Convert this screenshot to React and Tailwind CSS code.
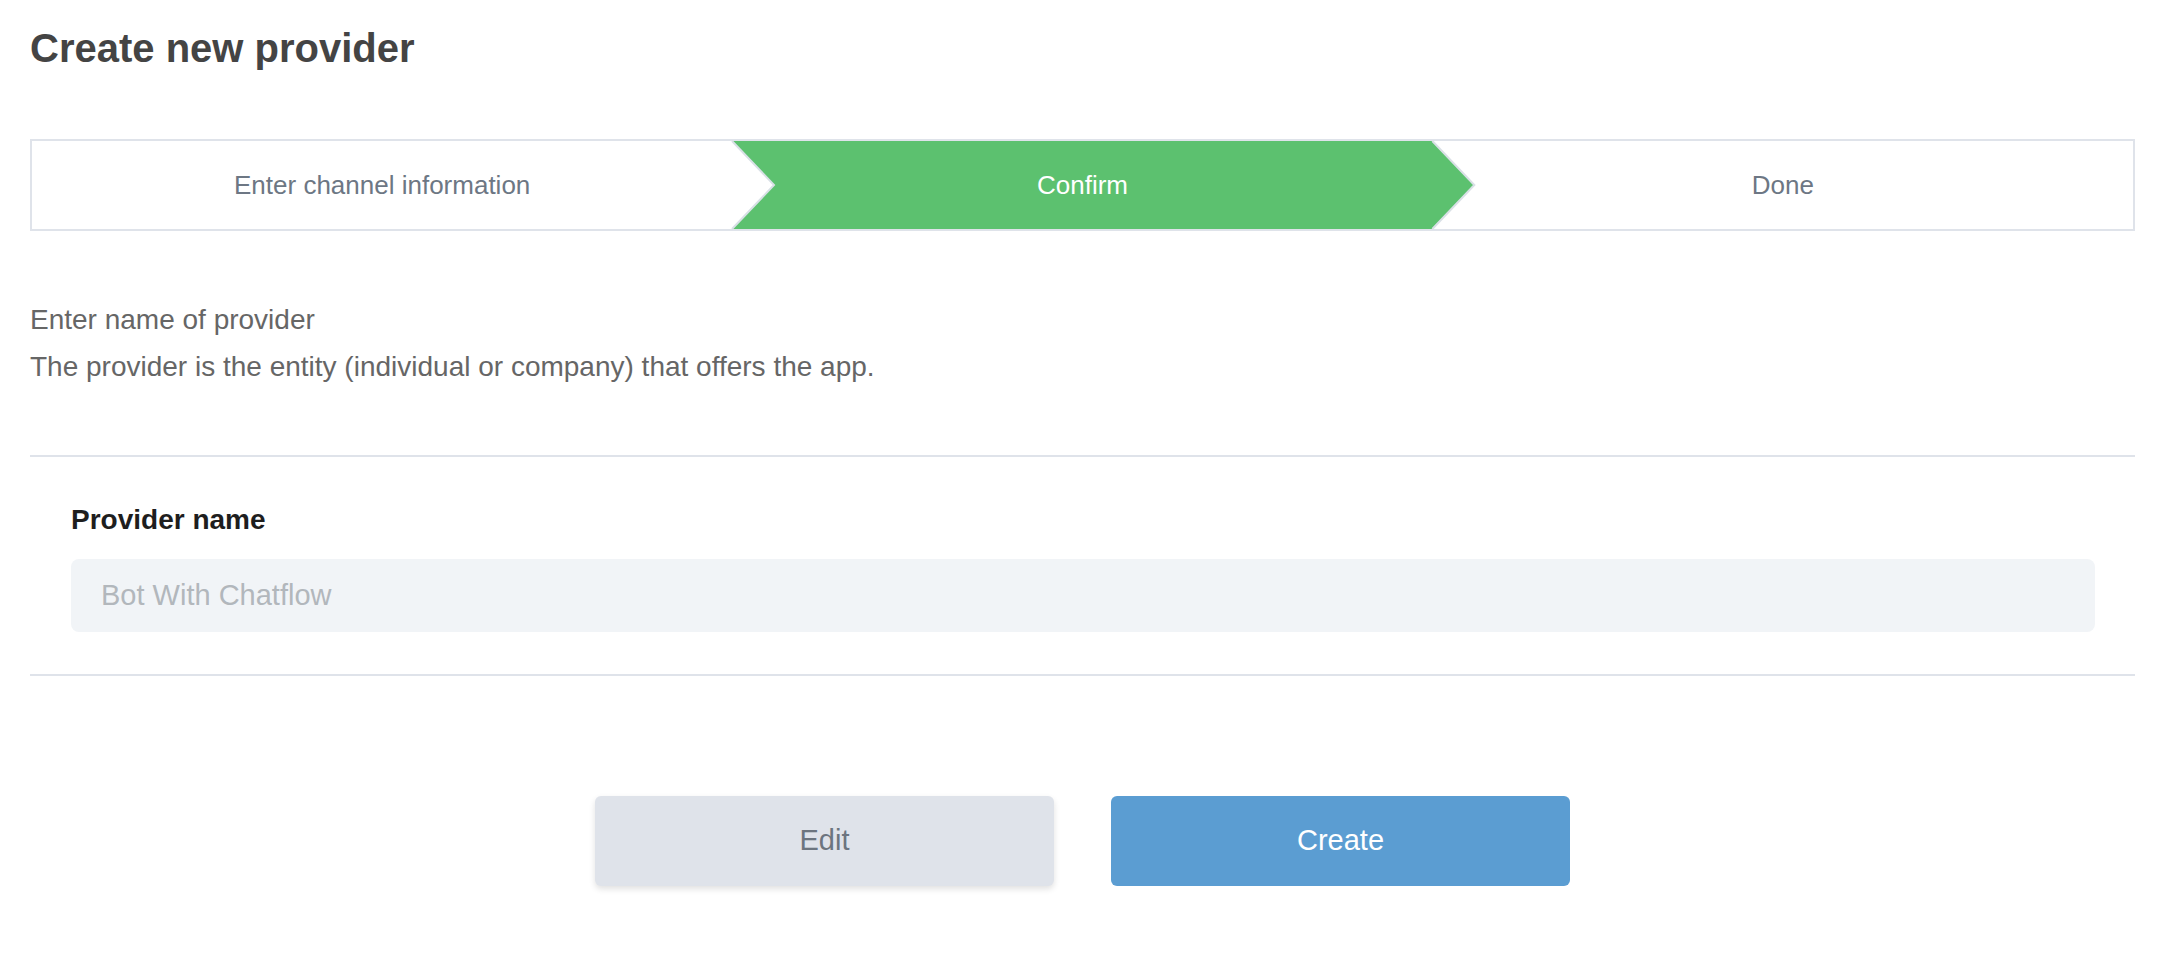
import React from "react";

const steps = ["Enter channel information", "Confirm", "Done"];

function Stepper({ current }) {
  return (
    <div className="mt-[67px] flex h-[92px] border-2 border-[#dfe3ea]">
      {steps.map((label, i) => {
        const active = i === current;
        return (
          <div
            key={label}
            className="relative flex flex-1 items-center justify-center"
          >
            {active && (
              // green chevron drawn behind the label, poking 42px into the next cell
              <svg
                className="absolute left-0 top-0 h-full w-[calc(100%+42px)] overflow-visible"
                viewBox="0 0 742 88"
                preserveAspectRatio="none"
              >
                <polygon
                  points="0,0 700,0 742,44 700,88 0,88 42,44"
                  fill="#5cc16f"
                />
                <polyline
                  points="0,0 42,44 0,88"
                  fill="none"
                  stroke="#d9e0e6"
                  strokeWidth="2"
                  vectorEffect="non-scaling-stroke"
                />
                <polyline
                  points="700,0 742,44 700,88"
                  fill="none"
                  stroke="#d9e0e6"
                  strokeWidth="2"
                  vectorEffect="non-scaling-stroke"
                />
              </svg>
            )}
            <span
              className={
                "relative text-[26px] " +
                (active ? "text-white" : "text-[#6d7784]")
              }
            >
              {label}
            </span>
          </div>
        );
      })}
    </div>
  );
}

export default function App() {
  return (
    <div
      className="min-h-screen bg-white pl-[30px] pr-[39px] pt-[24px] pb-[74px]"
      style={{ fontFamily: '"Liberation Sans", Arial, sans-serif' }}
    >
      <h1 className="text-[40px] font-bold leading-[48px] text-[#444444]">
        Create new provider
      </h1>

      <Stepper current={1} />

      {/* description */}
      <div className="mt-[65px] text-[28px] leading-[47px] text-[#666666]">
        <p>Enter name of provider</p>
        <p>The provider is the entity (individual or company) that offers the app.</p>
      </div>

      {/* form */}
      <div className="mt-[65px] border-y-2 border-[#dfe3ea] pl-[41px] pr-[40px] pt-[45px] pb-[42px]">
        <label className="block text-[28px] font-bold leading-[36px] text-[#1e1e1e]">
          Provider name
        </label>
        <input
          readOnly
          placeholder="Bot With Chatflow"
          className="mt-[21px] block h-[73px] w-full rounded-lg bg-[#f1f4f7] pl-[30px] text-[29px] text-[#333] outline-none placeholder:text-[#b2b7bc]"
        />
      </div>

      {/* actions */}
      <div className="mt-[120px] flex justify-center gap-[57px]">
        <button className="h-[90px] w-[459px] rounded-md bg-[#dfe3ea] text-[29px] text-[#6c757f] shadow-[0_3px_6px_rgba(0,0,0,0.12)]">
          Edit
        </button>
        <button className="h-[90px] w-[459px] rounded-md bg-[#5b9dd2] text-[29px] text-white">
          Create
        </button>
      </div>
    </div>
  );
}
